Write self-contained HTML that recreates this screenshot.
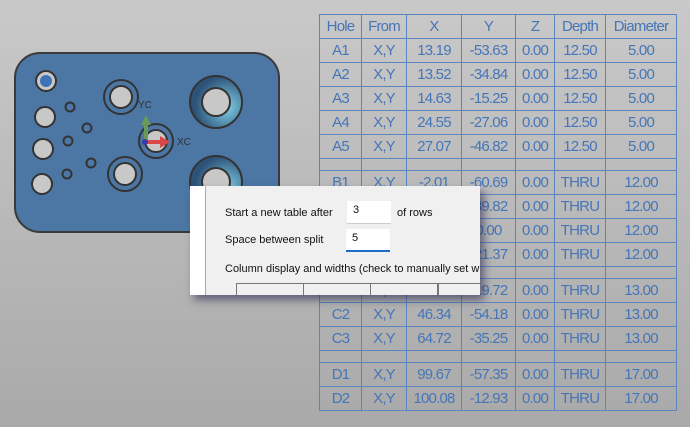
<!DOCTYPE html>
<html><head><style>
html,body{margin:0;padding:0}
body{width:690px;height:427px;overflow:hidden;position:relative;background:linear-gradient(#c9c9c9,#a9a9a9);font-family:"Liberation Sans",sans-serif}
svg{position:absolute;left:0;top:0}
table{position:absolute;left:319px;top:14px;border-collapse:collapse;color:#4576b8;font-size:15px;letter-spacing:-0.8px}
td{border:1px solid #5a86c0;text-align:center;padding:0;height:23px;line-height:23px;overflow:hidden;white-space:nowrap}
tr.s td{height:11px}
.dlg{position:absolute;left:190px;top:186px;width:290px;height:109px;background:#f0f0f0;box-shadow:4px 5px 8px rgba(40,40,80,.6);font-family:"Liberation Sans",sans-serif;font-size:11px;color:#111;overflow:hidden}
.strip{position:absolute;left:0;top:0;width:15px;height:109px;background:#fff;border-right:1px solid #aaa}
.t{position:absolute;white-space:nowrap}
.in{position:absolute;background:#fff;border-bottom:1px solid #ccc;width:44px;height:22px}
.in span{position:absolute;left:6px;top:3px}
.cb{position:absolute;top:97px;height:14px;border:1px solid #777;border-bottom:none;width:66px;background:#f0f0f0}
</style></head><body>
<svg width="690" height="427">
<defs><radialGradient id="g" cx="0.7" cy="0.6" r="0.6"><stop offset="0" stop-color="#7fd0e6"/><stop offset="1" stop-color="#2e5378"/></radialGradient></defs>
<rect x="15" y="53" width="264" height="179" rx="25" fill="#4c77a5" stroke="#3a3a3a" stroke-width="2"/>
<g stroke="#333" stroke-width="2" fill="#c8c8c8">
<circle cx="46" cy="81" r="10"/><circle cx="45" cy="117" r="10"/><circle cx="43" cy="149" r="10"/><circle cx="42" cy="184" r="10"/>
<circle cx="70" cy="107" r="4.5" fill="#4c77a5"/><circle cx="87" cy="128" r="4.5" fill="#4c77a5"/><circle cx="68" cy="141" r="4.5" fill="#4c77a5"/><circle cx="91" cy="163" r="4.5" fill="#4c77a5"/><circle cx="67" cy="174" r="4.5" fill="#4c77a5"/>
<circle cx="121" cy="97" r="17" fill="#4c77a5"/><circle cx="121" cy="97" r="11"/>
<circle cx="125" cy="174" r="17" fill="#4c77a5"/><circle cx="125" cy="174" r="11"/>
<circle cx="156" cy="141" r="17" fill="#4c77a5"/><circle cx="156" cy="141" r="11"/>
<circle cx="216" cy="102" r="26" fill="url(#g)"/><circle cx="216" cy="102" r="14"/>
<circle cx="216" cy="182" r="26" fill="url(#g)"/><circle cx="216" cy="182" r="14"/>
</g>
<circle cx="46" cy="81" r="6" fill="#3d74b8"/>
<rect x="144" y="122" width="4" height="18" fill="#6a9a5a"/>
<polygon points="141,125 146,115 151,125" fill="#6a9a5a"/>
<rect x="146" y="140" width="16" height="4" fill="#d84848"/>
<polygon points="160,136 170,142 160,148" fill="#d84848"/>
<circle cx="145" cy="142" r="3" fill="#3a3ab0"/>
<text x="138" y="108" font-size="10" fill="#333" font-family="Liberation Sans">YC</text>
<text x="177" y="145" font-size="10" fill="#333" font-family="Liberation Sans">XC</text>
</svg>
<table>
<tr><td style="width:41px">Hole</td><td style="width:44px">From</td><td style="width:54px">X</td><td style="width:53px">Y</td><td style="width:38px">Z</td><td style="width:50px">Depth</td><td style="width:70px">Diameter</td></tr>
<tr><td>A1</td><td>X,Y</td><td>13.19</td><td>-53.63</td><td>0.00</td><td>12.50</td><td>5.00</td></tr>
<tr><td>A2</td><td>X,Y</td><td>13.52</td><td>-34.84</td><td>0.00</td><td>12.50</td><td>5.00</td></tr>
<tr><td>A3</td><td>X,Y</td><td>14.63</td><td>-15.25</td><td>0.00</td><td>12.50</td><td>5.00</td></tr>
<tr><td>A4</td><td>X,Y</td><td>24.55</td><td>-27.06</td><td>0.00</td><td>12.50</td><td>5.00</td></tr>
<tr><td>A5</td><td>X,Y</td><td>27.07</td><td>-46.82</td><td>0.00</td><td>12.50</td><td>5.00</td></tr>
<tr class="s"><td></td><td></td><td></td><td></td><td></td><td></td><td></td></tr>
<tr><td>B1</td><td>X,Y</td><td>-2.01</td><td>-60.69</td><td>0.00</td><td>THRU</td><td>12.00</td></tr>
<tr><td>B2</td><td>X,Y</td><td>0.00</td><td>-39.82</td><td>0.00</td><td>THRU</td><td>12.00</td></tr>
<tr><td>B3</td><td>X,Y</td><td>0.00</td><td>0.00</td><td>0.00</td><td>THRU</td><td>12.00</td></tr>
<tr><td>B4</td><td>X,Y</td><td>0.00</td><td>-21.37</td><td>0.00</td><td>THRU</td><td>12.00</td></tr>
<tr class="s"><td></td><td></td><td></td><td></td><td></td><td></td><td></td></tr>
<tr><td>C1</td><td>X,Y</td><td>40.00</td><td>-19.72</td><td>0.00</td><td>THRU</td><td>13.00</td></tr>
<tr><td>C2</td><td>X,Y</td><td>46.34</td><td>-54.18</td><td>0.00</td><td>THRU</td><td>13.00</td></tr>
<tr><td>C3</td><td>X,Y</td><td>64.72</td><td>-35.25</td><td>0.00</td><td>THRU</td><td>13.00</td></tr>
<tr class="s"><td></td><td></td><td></td><td></td><td></td><td></td><td></td></tr>
<tr><td>D1</td><td>X,Y</td><td>99.67</td><td>-57.35</td><td>0.00</td><td>THRU</td><td>17.00</td></tr>
<tr><td>D2</td><td>X,Y</td><td>100.08</td><td>-12.93</td><td>0.00</td><td>THRU</td><td>17.00</td></tr>
</table>
<div class="dlg">
<div class="strip"></div>
<div class="t" style="left:35px;top:21px">Start a new table after</div>
<div class="in" style="left:157px;top:15px"><span>3</span></div>
<div class="t" style="left:207px;top:21px">of rows</div>
<div class="t" style="left:35px;top:48px">Space between split</div>
<div class="in" style="left:156px;top:43px;border-bottom:2px solid #1a6fc6;height:21px"><span>5</span></div>
<div class="t" style="left:35px;top:77px">Column display and widths (check to manually set widths)</div>
<div class="cb" style="left:46px"></div><div class="cb" style="left:113px"></div><div class="cb" style="left:180px"></div><div class="cb" style="left:248px"></div>
</div>
</body></html>
